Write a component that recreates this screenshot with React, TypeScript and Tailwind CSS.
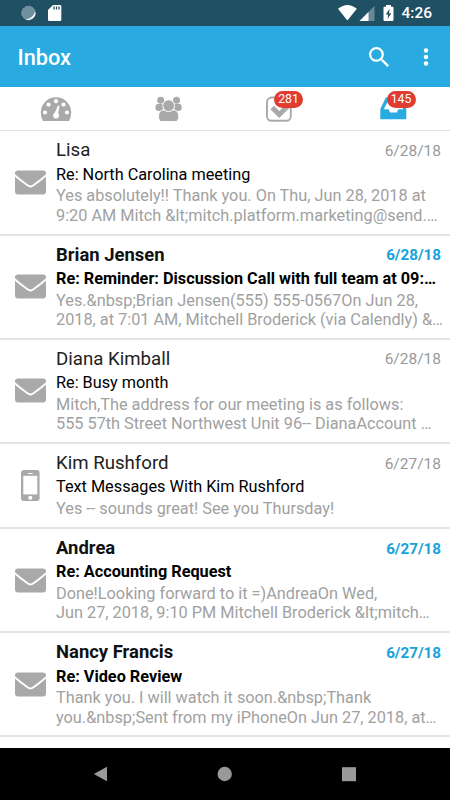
import React from "react";

type Message = {
  name: string;
  date: string;
  subject: string;
  lines: string[];
  unread?: boolean;
  sms?: boolean;
};

const messages: Message[] = [
  { name: "Lisa", date: "6/28/18", subject: "Re: North Carolina meeting", lines: ["Yes absolutely!! Thank you. On Thu, Jun 28, 2018 at", "9:20 AM Mitch &lt;mitch.platform.marketing@send.…"] },
  { name: "Brian Jensen", date: "6/28/18", subject: "Re: Reminder: Discussion Call with full team at 09:…", lines: ["Yes.&nbsp;Brian Jensen(555) 555-0567On Jun 28,", "2018, at 7:01 AM, Mitchell Broderick (via Calendly) &…"], unread: true },
  { name: "Diana Kimball", date: "6/28/18", subject: "Re: Busy month", lines: ["Mitch,The address for our meeting is as follows:", "555 57th Street Northwest Unit 96-- DianaAccount …"] },
  { name: "Kim Rushford", date: "6/27/18", subject: "Text Messages With Kim Rushford", lines: ["Yes -- sounds great! See you Thursday!"], sms: true },
  { name: "Andrea", date: "6/27/18", subject: "Re: Accounting Request", lines: ["Done!Looking forward to it =)AndreaOn Wed,", "Jun 27, 2018, 9:10 PM Mitchell Broderick &lt;mitch…"], unread: true },
  { name: "Nancy Francis", date: "6/27/18", subject: "Re: Video Review", lines: ["Thank you. I will watch it soon.&nbsp;Thank", "you.&nbsp;Sent from my iPhoneOn Jun 27, 2018, at…"], unread: true },
];

function Envelope() {
  return (
    <svg width="31" height="25" viewBox="0 0 31 25">
      <rect x="0" y="0.4" width="31" height="24.2" rx="3" fill="#a9a9a9" />
      <path d="M-1 4.6 C4 9 8 12 12.5 15.3 Q15.5 17.6 18.5 15.3 C23 12 27 9 32 4.6" fill="none" stroke="#fff" strokeWidth="1.9" />
    </svg>
  );
}

function Phone() {
  return (
    <svg width="19" height="31" viewBox="0 0 19 31">
      <rect width="18.6" height="31" rx="3" fill="#a9a9a9" />
      <rect x="2.3" y="5.8" width="14" height="18.6" fill="#fff" />
      <rect x="6.8" y="2.9" width="5" height="1" rx="0.5" fill="#fff" />
      <circle cx="9.3" cy="27.7" r="2" fill="#fff" />
    </svg>
  );
}

function Row({ m }: { m: Message }) {
  return (
    <article className={m.sms ? "flex h-[85px] border-b-2 border-[#e4e4e4] pt-[7px]" : "flex h-[104.2px] border-b-2 border-[#e4e4e4] pt-[7px]"}>
      <div className="flex w-[56px] shrink-0 items-center pb-[7px] pl-[15px]">
        {m.sms ? <div className="pl-[6px]"><Phone /></div> : <Envelope />}
      </div>
      <div className="min-w-0 flex-1 whitespace-nowrap">
        <div className="flex h-[25.5px] items-center justify-between pr-[9px]">
          <h2 className={m.unread ? "text-[18.45px] font-bold text-[#111]" : "text-[18.65px] text-[#222]"}>{m.name}</h2>
          <time className={m.unread ? "pt-px text-[15.2px] font-bold text-[#16a3dc]" : "pt-px text-[15.5px] text-[#999]"}>{m.date}</time>
        </div>
        <p className={m.unread ? "h-[22.5px] text-[16.25px] font-bold leading-[22px] text-black" : "h-[22.5px] text-[16.25px] leading-[22px] text-black"}>{m.subject}</p>
        {m.lines.map((line) => (
          <p key={line} className="h-[19.5px] text-[16.3px] leading-[20px] text-[#a1a1a1]">{line}</p>
        ))}
      </div>
    </article>
  );
}

function Badge({ n }: { n: number }) {
  return <span className="absolute left-[8px] top-[-5px] flex h-[17px] w-[29px] items-center justify-center rounded-full bg-[#e03c31] pt-px text-[12.3px] text-white">{n}</span>;
}

export default function App() {
  return (
    <main className="flex h-[800px] w-[450px] flex-col overflow-hidden bg-white font-['Roboto',sans-serif]">
      <header className="bg-[#29abe2]">
        <div className="flex h-[26px] items-center bg-[#1f5064] pl-[20px] pr-[18px]">
          <svg width="46" height="18" viewBox="0 0 46 18">
            <circle cx="8.5" cy="9" r="6.8" fill="#6f909c" stroke="#a5bac2" strokeWidth="1" strokeDasharray="1 1" />
            <path d="M15.2 7.5 A6.9 6.9 0 0 1 5.5 15.2 Q12.6 15.2 15.2 7.5" fill="#fff" />
            <path d="M33 1h7a1.3 1.3 0 0 1 1.3 1.3v13.4A1.3 1.3 0 0 1 40 17H29.3a1.3 1.3 0 0 1-1.3-1.3V6z" fill="#fff" />
            <path d="M34 2.5v3M36.5 2.5v3M39 2.5v3" stroke="#1f5064" strokeWidth="1.3" />
          </svg>
          <svg className="ml-auto" width="58" height="18" viewBox="0 0 58 18">
            <path d="M0 4.8Q9.4-2.8 18.8 4.8L9.4 16.6z" fill="#fff" />
            <path d="M21.5 17L36.5 2v15z" fill="#688a98" />
            <path d="M21.5 17L30.5 8v9z" fill="#fff" />
            <path d="M48 2.8V1h5v1.8h1.5q1 0 1 1V16q0 1-1 1h-8q-1 0-1-1V3.8q0-1 1-1z" fill="#fff" />
            <path d="M51.6 4.8L47.8 10.6h2.3L49.6 15l3.6-5.7H51z" fill="#1f5064" />
          </svg>
          <span className="ml-[5px] pt-[2px] text-[15.5px] font-medium text-white">4:26</span>
        </div>
        <div className="flex h-[61px] items-center pl-[17.5px] pr-[21px] text-white">
          <h1 className="pt-[3px] text-[21.7px] font-medium">Inbox</h1>
          <svg className="ml-auto" width="20" height="20" viewBox="3 3 17.5 17.5" fill="#fff">
            <path d="M15.5 14h-.79l-.28-.27A6.47 6.47 0 0 0 16 9.5 6.5 6.5 0 1 0 9.5 16c1.61 0 3.09-.59 4.23-1.57l.27.28v.79l5 4.99L20.49 19l-4.99-5zm-6 0C7.01 14 5 11.99 5 9.5S7.01 5 9.5 5 14 7.01 14 9.5 11.99 14 9.5 14z" />
          </svg>
          <svg className="ml-[34px]" width="6" height="20" viewBox="0 0 6 20" fill="#fff">
            <circle cx="3" cy="3.5" r="2.2" /><circle cx="3" cy="10" r="2.2" /><circle cx="3" cy="16.5" r="2.2" />
          </svg>
        </div>
      </header>

      <nav className="flex h-[44px] items-center border-b border-[#e2e2e2] pl-[40px]">
        <svg width="32" height="26" viewBox="0 0 32 26">
          <path d="M3 25Q.8 21.5.8 16.5A15.2 15.2 0 0 1 31.2 16.5Q31.2 21.5 29 25z" fill="#a9a9a9" />
          <g fill="#fff">
            <circle cx="5" cy="16.5" r="2.1" /><circle cx="8.5" cy="8.6" r="2.1" /><circle cx="16" cy="5.2" r="2.1" /><circle cx="23.5" cy="8.6" r="2.1" /><circle cx="27" cy="16.5" r="2.1" />
            <path d="M18 9.5l1.6.4-1.4 7.3a3.1 3.1 0 1 1-3.4-.5z" />
          </g>
        </svg>
        <svg className="ml-[83px]" width="28" height="26" viewBox="0 0 28 26" fill="#a9a9a9">
          <circle cx="5.7" cy="4.3" r="3.5" /><circle cx="21.5" cy="4.3" r="3.5" />
          <path d="M2.5 8h5.5v7H3Q.4 14.5.4 12q0-4 2.1-4zM24.7 8h-5.5v7h5q2.6-.5 2.6-3 0-4-2.1-4z" />
          <path d="M3.5 20.5q0-6.500 5-6.500h10.200q5 0 5 6.500 0 5-3.200 5H6.700q-3.200 0-3.200-5z" stroke="#fff" />
          <circle cx="13.6" cy="9.7" r="5.9" stroke="#fff" />
        </svg>
        <div className="relative ml-[83px] h-[26px] w-[28px]">
          <svg width="28" height="26" viewBox="0 0 28 26">
            <rect x="1" y="1.5" width="23.8" height="23.3" rx="4.5" fill="none" stroke="#a9a9a9" strokeWidth="1.9" />
            <path d="M6.2 11.5l7 7L24 8" fill="none" stroke="#a9a9a9" strokeWidth="5" />
          </svg>
          <Badge n={281} />
        </div>
        <div className="relative ml-[84.5px] h-[26px] w-[28px]">
          <svg width="28" height="26" viewBox="0 0 28 26">
            <path d="M1.3 13L6.8 1.5h15L27.3 13V23.3H1.300z" fill="#29abe2" />
            <path d="M4.8 13.3L9.300 4.500h10L24.300 13.300h-4.800l-1.800 3.300h-6.500L9.500 13.300z" fill="#fff" />
          </svg>
          <Badge n={145} />
        </div>
      </nav>

      <section className="flex-1 overflow-hidden pt-[0.4px]">
        {messages.map((m) => <Row key={m.name} m={m} />)}
      </section>

      <footer className="flex h-[52px] shrink-0 items-center bg-black pl-[93px]">
        <svg width="265" height="16" viewBox="0 0 265 16" fill="#999">
          <path d="M.8 8L14 .8v14.4z" /><circle cx="131.7" cy="8" r="7.2" /><rect x="249" y="1.2" width="14" height="14" />
        </svg>
      </footer>
    </main>
  );
}
